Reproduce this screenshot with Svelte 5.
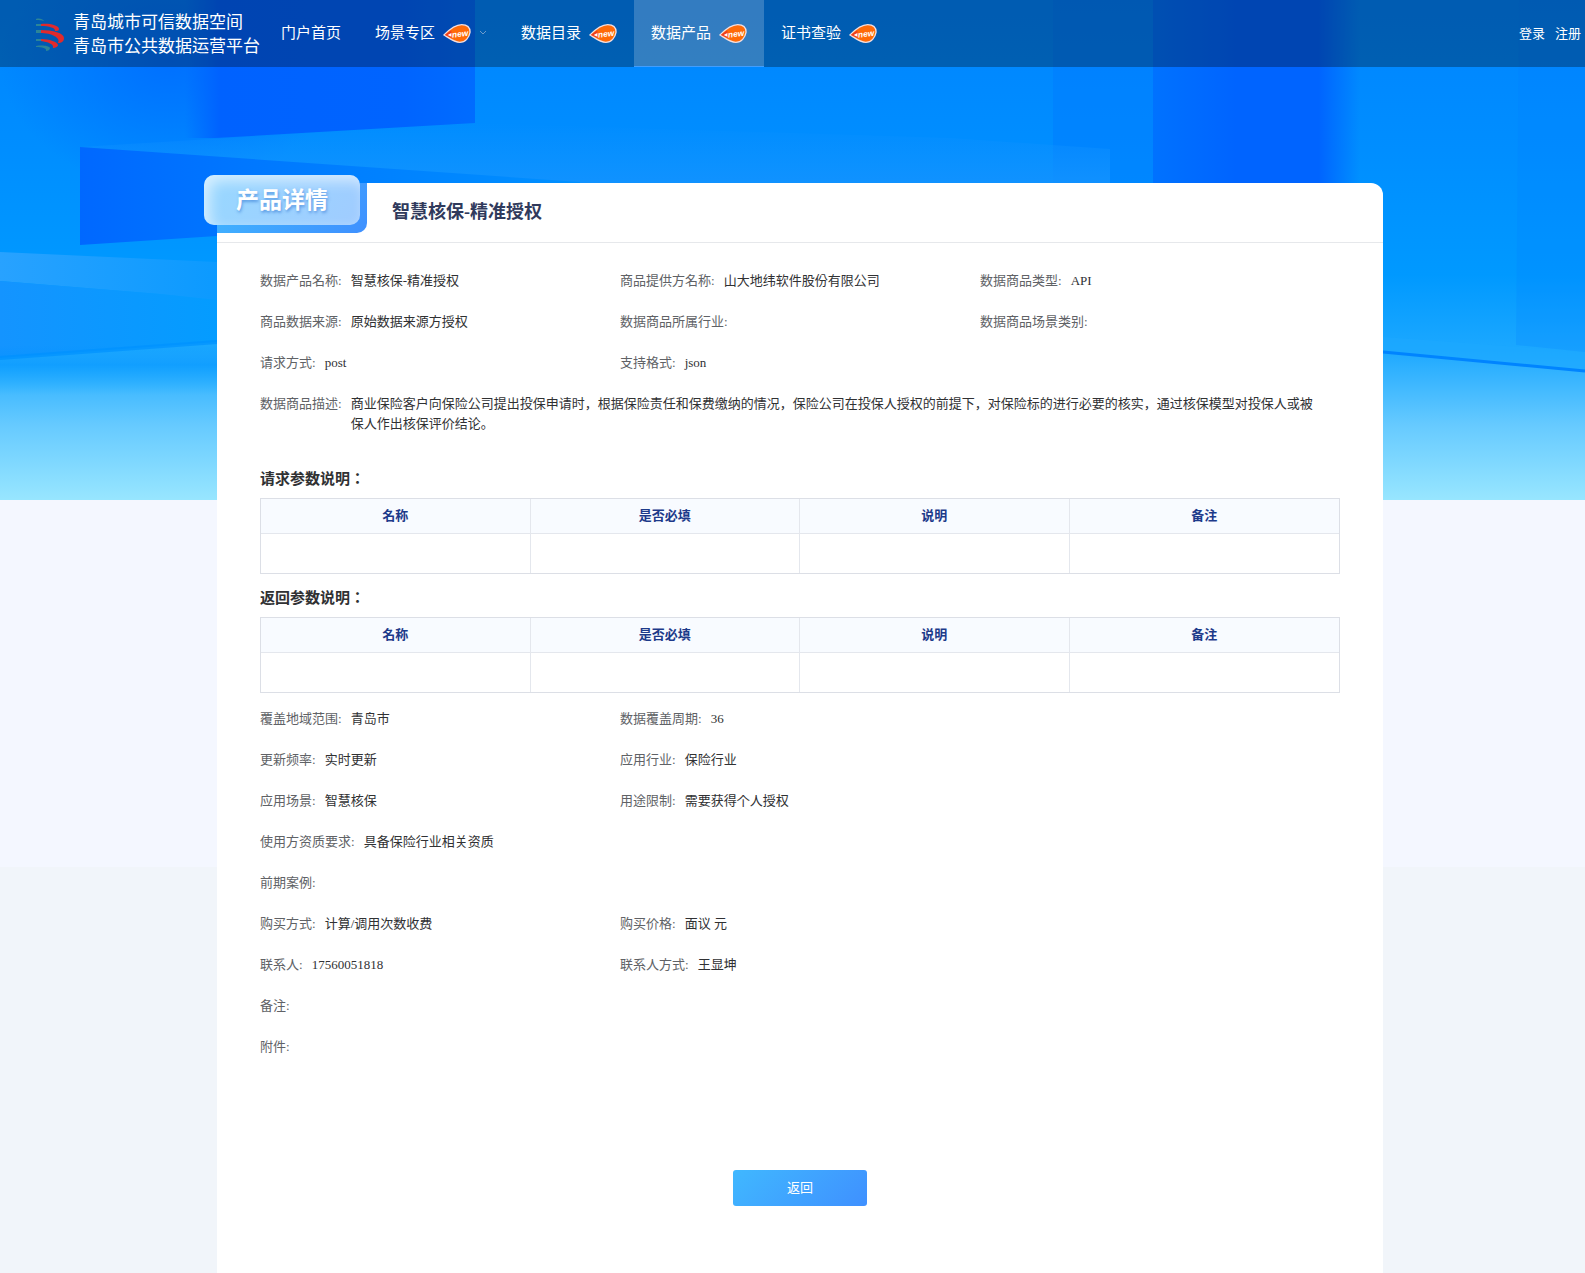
<script>
  const menus = [
    { name: "门户首页" },
    { name: "场景专区", isNew: true, children: true },
    { name: "数据目录", isNew: true },
    { name: "数据产品", isNew: true },
    { name: "证书查验", isNew: true },
  ];

  let current = $state("数据产品");

  const baseInfo = [
    [
      { label: "数据产品名称", value: "智慧核保-精准授权" },
      { label: "商品提供方名称", value: "山大地纬软件股份有限公司" },
      { label: "数据商品类型", value: "API" },
    ],
    [
      { label: "商品数据来源", value: "原始数据来源方授权" },
      { label: "数据商品所属行业", value: "" },
      { label: "数据商品场景类别", value: "" },
    ],
    [
      { label: "请求方式", value: "post" },
      { label: "支持格式", value: "json" },
    ],
    [
      {
        label: "数据商品描述",
        value:
          "商业保险客户向保险公司提出投保申请时，根据保险责任和保费缴纳的情况，保险公司在投保人授权的前提下，对保险标的进行必要的核实，通过核保模型对投保人或被保人作出核保评价结论。",
        wide: true,
      },
    ],
  ];

  const params = ["请求参数说明：", "返回参数说明："];
  const columns = ["名称", "是否必填", "说明", "备注"];

  const moreInfo = [
    [
      { label: "覆盖地域范围", value: "青岛市" },
      { label: "数据覆盖周期", value: "36" },
    ],
    [
      { label: "更新频率", value: "实时更新" },
      { label: "应用行业", value: "保险行业" },
    ],
    [
      { label: "应用场景", value: "智慧核保" },
      { label: "用途限制", value: "需要获得个人授权" },
    ],
    [{ label: "使用方资质要求", value: "具备保险行业相关资质" }],
    [{ label: "前期案例", value: "" }],
    [
      { label: "购买方式", value: "计算/调用次数收费" },
      { label: "购买价格", value: "面议 元" },
    ],
    [
      { label: "联系人", value: "17560051818" },
      { label: "联系人方式", value: "王显坤" },
    ],
    [{ label: "备注", value: "" }],
    [{ label: "附件", value: "" }],
  ];
</script>

{#snippet infoRows(rows)}
  {#each rows as row}
    <dl class="row">
      {#each row as item}
        <div class="item" class:wide={item.wide}>
          <dt>{item.label}:</dt>
          <dd>{item.value}</dd>
        </div>
      {/each}
    </dl>
  {/each}
{/snippet}

<div class="page">
  <!-- banner -->
  <svg class="banner" viewBox="0 0 1585 500" preserveAspectRatio="none" aria-hidden="true">
    <defs>
      <linearGradient id="sky" x1="0" y1="0" x2="0" y2="1">
        <stop offset="0" stop-color="#0084ff" />
        <stop offset="0.3" stop-color="#008eff" />
        <stop offset="0.55" stop-color="#0099ff" />
        <stop offset="0.7" stop-color="#1ca8ff" />
        <stop offset="0.85" stop-color="#66caff" />
        <stop offset="1" stop-color="#98e6ff" />
      </linearGradient>
      <radialGradient id="shade">
        <stop offset="0" stop-color="#0070ff" />
        <stop offset="1" stop-color="#0070ff" stop-opacity="0" />
      </radialGradient>
      <linearGradient id="blockLeft" x1="0" y1="0" x2="1" y2="0">
        <stop offset="0" stop-color="#0062ff" stop-opacity="0" />
        <stop offset="0.12" stop-color="#0062ff" />
        <stop offset="0.75" stop-color="#0064ff" />
        <stop offset="1" stop-color="#006cff" />
      </linearGradient>
      <linearGradient id="blockRight" x1="0" y1="0" x2="1" y2="0">
        <stop offset="0" stop-color="#0072ff" />
        <stop offset="0.4" stop-color="#0064ff" />
        <stop offset="0.8" stop-color="#0064ff" />
        <stop offset="1" stop-color="#0064ff" stop-opacity="0" />
      </linearGradient>
      <linearGradient id="cube" x1="0" y1="0" x2="1" y2="0">
        <stop offset="0" stop-color="#0068ff" />
        <stop offset="0.35" stop-color="#0078ff" />
        <stop offset="1" stop-color="#0090ff" />
      </linearGradient>
      <linearGradient id="facet" x1="0" y1="0" x2="0" y2="1">
        <stop offset="0" stop-color="#1292ff" stop-opacity="0" />
        <stop offset="1" stop-color="#1292ff" />
      </linearGradient>
      <linearGradient id="glow" x1="0" y1="0" x2="1" y2="0">
        <stop offset="0" stop-color="#28a2ff" />
        <stop offset="1" stop-color="#0c9aff" />
      </linearGradient>
      <linearGradient id="wall" x1="0" y1="0" x2="1" y2="0">
        <stop offset="0" stop-color="#1494ff" />
        <stop offset="1" stop-color="#049cff" />
      </linearGradient>
      <linearGradient id="streak" x1="0" y1="0" x2="0" y2="1">
        <stop offset="0" stop-color="#0090ff" stop-opacity="0" />
        <stop offset="0.4" stop-color="#0094ff" stop-opacity="0.6" />
        <stop offset="1" stop-color="#00a0ff" stop-opacity="0" />
      </linearGradient>
    </defs>
    <rect width="1585" height="500" fill="url(#sky)" />
    <ellipse cx="170" cy="60" rx="170" ry="130" fill="url(#shade)" />
    <path d="M185 0H475V123L215 138H185Z" fill="url(#blockLeft)" />
    <path d="M1053 0H1153V190H1053Z" fill="#0078ff" opacity="0.4" />
    <path d="M1153 0H1360V190H1153Z" fill="url(#blockRight)" />
    <path d="M80 147L475 123L950 138L1110 149V190H80Z" fill="url(#facet)" />
    <path d="M80 147L580 182V200L217 236L80 245Z" fill="url(#cube)" />
    <path d="M0 252L217 262V300L160 294L0 281Z" fill="url(#glow)" />
    <path d="M0 281L160 294L217 300V342L0 358Z" fill="url(#wall)" />
    <path d="M0 345H217V395H0Z" fill="url(#streak)" />
    <path d="M0 358L217 342" stroke="#0092ff" stroke-width="4" opacity="0.7" />
    <path d="M1383 337L1585 352V371L1383 352Z" fill="#1ca8ff" opacity="0.7" />
    <path d="M1383 352L1585 371" stroke="#0084ff" stroke-width="3" />
    <path d="M1519 0H1585V352L1516 345Z" fill="#007cff" opacity="0.2" />
  </svg>

  <header>
    <a class="logo" href="/">
      <svg viewBox="0 0 30 34" width="30" height="34" aria-hidden="true">
        <g fill="#e02a2c">
          <path d="M6 6C13 5 24 7 24 11C24 13 22 13 20 13C21 10 14 8 6 8Z" />
          <path d="M5 12C18 12 29 15 29 20C29 24 26 25 23 25C26 20 17 15 5 15Z" />
          <path d="M6 21C14 21 23 24 23 27C23 29 20 30 18 30C19 26 13 24 6 23Z" />
        </g>
        <g fill="#2c8597">
          <path d="M1 1C4 0 8 1 9 3C7 2 4 2 1 2Z" />
          <path d="M1 6H6V8H1ZM1 12H6V15H1ZM1 21H6V23H1Z" />
          <path d="M1 28C8 27 14 28 15 30C15 32 13 33 11 33C12 30 7 29 1 29Z" />
        </g>
      </svg>
      <span>青岛城市可信数据空间<br />青岛市公共数据运营平台</span>
    </a>
    <nav>
      {#each menus as menu}
        <a
          href="#{menu.name}"
          class:active={menu.name == current}
          onclick={() => (current = menu.name)}
        >
          {menu.name}
          {#if menu.isNew}
            <svg class="new" viewBox="0 0 30 21" width="28" height="21" aria-label="new">
              <path
                d="M1 12C7 6 14 1 20 1C26 1 29 4 29 9C28 15 24 20 18 20C12 20 6 15 1 12Z"
                fill="#ff6a08"
                stroke="#f4dfe0"
                stroke-width="1.4"
              />
              <path d="M2 12L9 7V15Z" fill="#ef3b20" />
              <path d="M5 12L9 10V14Z" fill="#fff" />
              <text x="10" y="15" transform="rotate(-7 10 15)">new</text>
            </svg>
          {/if}
          {#if menu.children}
            <svg class="arrow" viewBox="0 0 8 6" width="8" height="6" aria-hidden="true">
              <path d="M1 1L4 4L7 1" fill="none" stroke="#6f9bcb" />
            </svg>
          {/if}
        </a>
      {/each}
    </nav>
    <div class="user">
      <a href="#login">登录</a>
      <a href="#register">注册</a>
    </div>
  </header>

  <main>
    <div class="card-head">
      <div class="tag"><span>产品详情</span></div>
      <h1>智慧核保-精准授权</h1>
    </div>

    <div class="card-body">
      {@render infoRows(baseInfo)}

      <div class="params">
        {#each params as title}
          <h2>{title}</h2>
          <table aria-label={title}>
            <thead>
              <tr>
                {#each columns as column}
                  <th>{column}</th>
                {/each}
              </tr>
            </thead>
            <tbody>
              <tr>
                {#each columns as column}
                  <td></td>
                {/each}
              </tr>
            </tbody>
          </table>
        {/each}
      </div>

      {@render infoRows(moreInfo)}

      <div class="footer">
        <button type="button" onclick={() => history.back()}>返回</button>
      </div>
    </div>
  </main>
</div>

<style>
  :global(body) {
    margin: 0;
    background: #f1f5fa;
  }

  .page {
    position: relative;
    display: flex;
    flex-direction: column;
    min-height: 100vh;
    background: linear-gradient(#f4f7ff, #f4f7ff) no-repeat top / 100% 867px;
    font-family: "Liberation Serif", "Noto Sans CJK JP", serif;
    font-size: 13px;
    line-height: 20px;
    color: #303133;
  }

  .banner {
    position: absolute;
    top: 0;
    left: 0;
    width: 100%;
    height: 500px;
  }

  a {
    color: #fff;
    text-decoration: none;
  }

  /* top bar */
  header {
    position: relative;
    display: flex;
    height: 67px;
    background: rgba(0, 0, 0, 0.3);
  }

  .logo {
    display: flex;
    align-items: center;
    gap: 8px;
    padding: 3px 4px 0 35px;
    font-size: 17px;
    line-height: 24px;
    white-space: nowrap;
  }

  nav {
    display: flex;
    flex: 1;
  }

  nav a {
    display: flex;
    align-items: center;
    gap: 8px;
    box-sizing: border-box;
    padding: 0 17px;
    font-size: 15px;
    white-space: nowrap;
    border-bottom: 1px solid transparent;
  }

  nav a.active {
    background: rgba(255, 255, 255, 0.2);
    border-bottom-color: #409eff;
  }

  .new text {
    font: italic bold 9px "Liberation Sans", sans-serif;
    fill: #fff;
  }

  .user {
    display: flex;
    align-items: center;
    gap: 10px;
    padding-right: 4px;
  }

  /* detail card */
  main {
    position: relative;
    flex: 1;
    margin: 116px 202px 0 217px;
    background: #fff;
    border-radius: 0 12px 0 0;
  }

  .card-head {
    display: flex;
    align-items: flex-start;
    gap: 25px;
    height: 59px;
    border-bottom: 1px solid #e6e8eb;
  }

  .tag {
    position: relative;
    width: 150px;
    height: 50px;
    background: linear-gradient(135deg, #40b8ff, #3f90ff);
    border-radius: 0 0 10px 0;
  }

  .tag span {
    position: absolute;
    top: -8px;
    left: -13px;
    width: 156px;
    height: 50px;
    border-radius: 10px;
    background: linear-gradient(120deg, #98d8ff, #a0ccff);
    box-shadow: inset 6px 6px 14px rgba(255, 255, 255, 0.6);
    color: #fff;
    font-size: 23px;
    font-weight: bold;
    line-height: 52px;
    text-align: center;
    text-shadow: 1px 2px 3px rgba(50, 120, 210, 0.6);
  }

  h1 {
    margin: 0;
    font-size: 18px;
    line-height: 58px;
    color: #303a5c;
  }

  .card-body {
    padding: 28px 43px 60px;
  }

  .row {
    display: grid;
    grid-template-columns: repeat(3, 1fr);
    margin: 0 0 21px;
  }

  .item {
    display: flex;
    gap: 9px;
  }

  /* long text takes the whole row */
  .item.wide {
    grid-column: 1 / -1;
    padding-right: 20px;
  }

  dt {
    flex: none;
    color: #606266;
  }

  dd {
    margin: 0;
  }

  .params {
    padding: 14px 0 16px;
  }

  h2 {
    margin: 0;
    font-size: 15px;
    line-height: 20px;
    padding: 0 0 9px;
  }

  table {
    width: 100%;
    table-layout: fixed;
    border-collapse: separate;
    border-spacing: 0;
    border: 1px solid #dcdfe6;
  }

  table + h2 {
    padding-top: 14px;
  }

  th,
  td {
    height: 34px;
    padding: 0;
    border-right: 1px solid #e4e7ed;
  }

  th {
    background: #f8fbff;
    border-bottom: 1px solid #e4e7ed;
    color: #1d3a8a;
  }

  td {
    height: 39px;
  }

  th:last-child,
  td:last-child {
    border-right: 0;
  }

  .footer {
    display: flex;
    justify-content: center;
    padding-top: 92px;
  }

  button {
    width: 134px;
    height: 36px;
    border: 0;
    border-radius: 3px;
    background: linear-gradient(135deg, #40b8ff, #3f90ff);
    color: #fff;
    font: inherit;
    cursor: pointer;
  }
</style>
